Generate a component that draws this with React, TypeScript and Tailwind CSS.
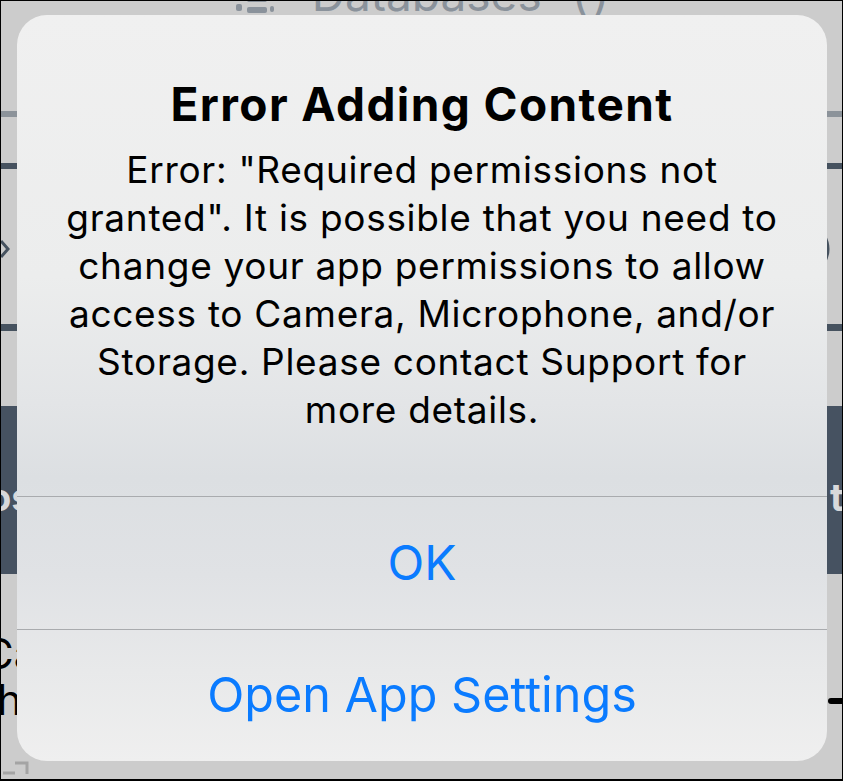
const SF = "font-['Inter','Noto_Sans',sans-serif]";

const bodyLines = [
  'Error: "Required permissions not',
  'granted". It is possible that you need to',
  'change your app permissions to allow',
  'access to Camera, Microphone, and/or',
  'Storage. Please contact Support for',
  'more details.',
];

function Backdrop() {
  return (
    <div className={`flex h-full flex-col ${SF}`}>
      <div className="flex h-[110px] justify-center overflow-hidden">
        <div className="-mt-[30px] ml-[2px] flex h-[44px] items-start text-[46px] leading-none text-[#8a929b]">
          <svg width="38" height="44" viewBox="0 0 38 44" className="ml-[4px]">
            <rect x="0" y="33" width="6" height="7" rx="2" fill="#8a929b" />
            <rect x="11" y="25" width="20" height="6" rx="2" fill="#8a929b" />
            <rect x="11" y="36" width="20" height="6" rx="2" fill="#8a929b" />
            <rect x="34" y="35" width="4" height="6" rx="2" fill="#8a929b" />
          </svg>
          <span className="ml-[38px] tracking-[0px]">Databases</span>
          <span className="ml-[30px] tracking-[4px]">()</span>
        </div>
      </div>
      <div className="h-[6px] bg-[#8c939a]" />
      <div className="h-[46px]" />
      <div className="h-[6px] bg-[#46525f]" />
      <div className="flex h-[155px] items-center justify-between pt-[4px]">
        <svg width="10" height="20" viewBox="0 0 10 20">
          <polyline points="0,2 7,10 0,18" fill="none" stroke="#46525f" strokeWidth="3" />
        </svg>
        <svg width="14" height="30" viewBox="0 0 14 30" className="mr-[7px]">
          <path d="M3 1 Q11 15 3 29" fill="none" stroke="#46525f" strokeWidth="3" />
        </svg>
      </div>
      <div className="h-[7px] bg-[#46525f]" />
      <div className="h-[75px]" />
      <div className="flex h-[168px] items-center justify-between overflow-hidden bg-[#465261] text-[38px] font-bold text-[#d8d9db]">
        <span className="-ml-[13px] mt-[14px]">os</span>
        <span className="-mr-[2px] mt-[14px]">t</span>
      </div>
      <div className="flex flex-1 flex-col">
        <div className="mt-[58px] h-[44px] overflow-hidden text-[42px] leading-[44px] text-black">
          <span className="-ml-[18px]">Ca</span>
        </div>
        <div className="flex h-[48px] items-center justify-between text-[42px] leading-[48px] text-black">
          <span className="-ml-[4px]">h</span>
          <div className="mt-[2px] h-[6px] w-[14px] rounded-l-full bg-black" />
        </div>
        <div className="mt-auto mb-[4px] ml-[2px]">
          <svg width="26" height="14" viewBox="0 0 26 14">
            <path d="M12 2 H24 V13" fill="none" stroke="#a4a4a4" strokeWidth="3" />
            <path d="M0 12 H12" fill="none" stroke="#a4a4a4" strokeWidth="3" />
          </svg>
        </div>
      </div>
    </div>
  );
}

function Alert() {
  return (
    <div
      className={`absolute left-[16px] top-[14px] flex h-[746px] w-[810px] flex-col overflow-hidden rounded-[30px] bg-[linear-gradient(180deg,#f0f0f0_0%,#eceded_35%,#e3e5e7_52%,#dcdfe2_62%,#e0e2e5_75%,#e8e9ea_88%,#efefef_100%)] ${SF}`}
    >
      <div className="flex h-[481px] flex-col items-center pt-[63px] text-center text-black">
        <div className="text-[46px] font-bold leading-[52px] tracking-[1.4px]">
          Error Adding Content
        </div>
        <div className="mt-[16px] text-[37px] leading-[48px] tracking-[0.7px]">
          {bodyLines.map((l, i) => (
            <div key={i}>{l}</div>
          ))}
        </div>
      </div>
      <div className="flex h-[133px] items-center justify-center border-t border-[#a9abae] text-[48px] text-[#0a7bff]">
        OK
      </div>
      <div className="flex flex-1 items-center justify-center border-t border-[#a9abae] text-[48.5px] text-[#0a7bff]">
        Open App Settings
      </div>
    </div>
  );
}

export default function App() {
  return (
    <div className="relative h-[781px] w-[843px] overflow-hidden border border-b-2 border-black bg-[#cccccc]">
      <Backdrop />
      <Alert />
    </div>
  );
}
